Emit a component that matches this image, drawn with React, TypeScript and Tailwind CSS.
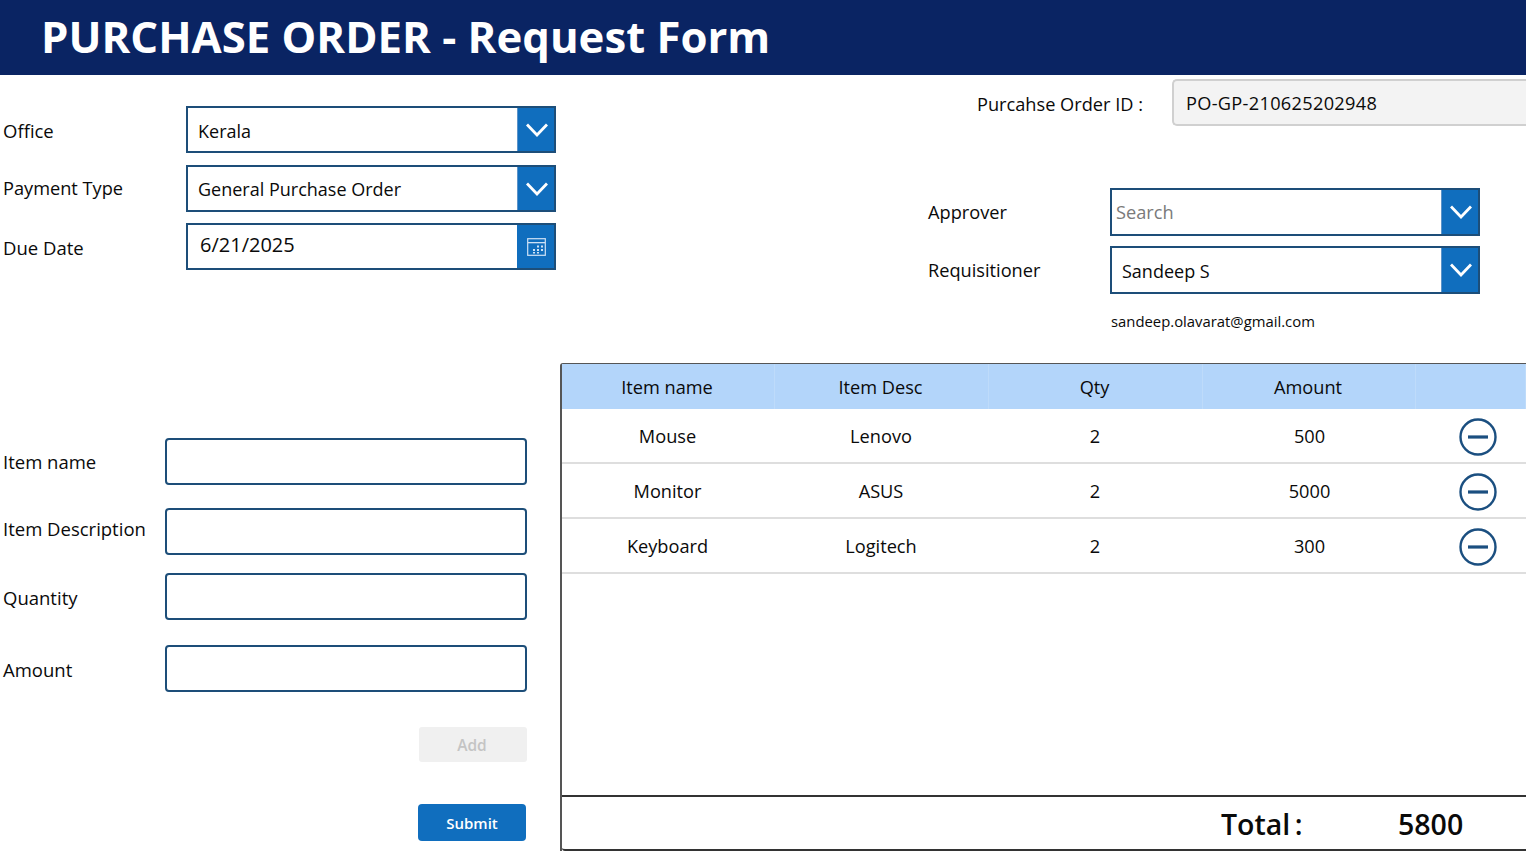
const rows = [
  { name: "Mouse", desc: "Lenovo", qty: "2", amount: "500" },
  { name: "Monitor", desc: "ASUS", qty: "2", amount: "5000" },
  { name: "Keyboard", desc: "Logitech", qty: "2", amount: "300" },
];

const Chevron = () => (
  <div className="flex h-full w-[37px] items-center justify-center border-l border-[#5b93c9] bg-[#106ebe] pl-[1px]">
    <svg width="22" height="14" viewBox="0 0 22 14" fill="none">
      <path d="M1 1.5 L11 12 L21 1.5" stroke="#fff" strokeWidth="2.8" />
    </svg>
  </div>
);

const CalendarIcon = () => (
  <svg width="19" height="18" viewBox="0 0 19 18" fill="none">
    <rect x="0.7" y="0.7" width="17.6" height="16.6" stroke="#cfe2f5" strokeWidth="1.2" />
    <rect x="1" y="4" width="17" height="1.3" fill="#cfe2f5" />
    <path d="M10 7.5h2v2h-2zM14 7.5h2v2h-2zM6 11h2v2H6zM10 11h2v2h-2zM14 11h2v2h-2zM6 14h2v1.6H6zM10 14h2v1.6h-2z" fill="#cfe2f5" />
  </svg>
);

const MinusCircle = () => (
  <svg width="38" height="38" viewBox="0 0 38 38" fill="none">
    <circle cx="19" cy="19" r="17.5" stroke="#1b4f80" strokeWidth="2.4" />
    <rect x="9" y="17.4" width="20" height="3.2" fill="#1b4f80" />
  </svg>
);

const SelectBox = ({ value, className = "h-[47px]", textClass = "pt-[3px]" }: { value: string; className?: string; textClass?: string }) => (
  <div className={`flex w-[370px] items-center border-2 border-[#1d4e79] bg-white ${className}`}>
    <div className={`flex-1 pl-[10px] text-[18px] ${textClass}`}>{value}</div>
    <Chevron />
  </div>
);

const TextField = ({ label, className, labelClass }: { label: string; className: string; labelClass: string }) => (
  <div className={`flex items-center ${className}`}>
    <div className={`w-[162px] text-[18.5px] ${labelClass}`}>{label}</div>
    <div className="h-[47px] w-[362px] rounded-[4px] border-2 border-[#1d4e79] bg-white"></div>
  </div>
);

export default function App() {
  return (
    <div className="h-[851px] w-[1526px] overflow-hidden bg-white font-['Open_Sans','Noto_Sans',sans-serif] text-[#0a0a0a]">
      {/* Header */}
      <div className="flex h-[75px] items-center bg-[#0a2463] pb-[2px] pl-[41px] text-[43.7px] font-bold text-white">
        PURCHASE ORDER - Request Form
      </div>

      {/* Top section */}
      <div className="flex h-[288px] justify-between">
        <div className="flex flex-col gap-[11px] pt-[31px] pl-[3px]">
          <div className="flex items-center">
            <div className="w-[183px] pt-[3px] text-[18.5px]">Office</div>
            <SelectBox value="Kerala" />
          </div>
          <div className="mt-[1px] flex items-center">
            <div className="w-[183px] pt-[1px] text-[18.2px]">Payment Type</div>
            <SelectBox value="General Purchase Order" textClass="pt-[1px]" />
          </div>
          <div className="flex items-center">
            <div className="w-[183px] pt-[3px] text-[18.5px]">Due Date</div>
            <div className="flex h-[47px] w-[370px] items-center border-2 border-[#1d4e79] bg-white">
              <div className="flex-1 pb-[3px] pl-[12px] text-[20px]">6/21/2025</div>
              <div className="flex h-full w-[37px] items-center justify-center bg-[#106ebe] pl-[1px]">
                <CalendarIcon />
              </div>
            </div>
          </div>
        </div>

        <div className="w-[598px] pt-[4px]">
          <div className="flex items-center pl-[49px]">
            <div className="w-[195px] pt-[4px] text-[18.2px]">Purcahse Order ID :</div>
            <div className="flex h-[47px] flex-1 items-center rounded-l-[5px] border-2 border-r-0 border-[#d0d0d0] bg-[#f3f3f3] pt-[3px] pl-[12px] text-[18.2px] tracking-[0.3px]">
              PO-GP-210625202948
            </div>
          </div>
          <div className="mt-[62px] flex flex-col gap-[10px]">
            <div className="flex items-center">
              <div className="w-[182px] pt-[2px] text-[18.2px]">Approver</div>
              <div className="flex h-[48px] w-[370px] items-center border-2 border-[#1d4e79]">
                <div className="flex-1 pt-[1px] pl-[4px] text-[18.2px] text-[#7a7a7a]">Search</div>
                <Chevron />
              </div>
            </div>
            <div className="flex items-center">
              <div className="w-[182px] pt-[2px] text-[18.2px]">Requisitioner</div>
              <SelectBox value="Sandeep S" className="h-[48px]" />
            </div>
          </div>
          <div className="mt-[15px] pl-[183px] text-[14.85px] leading-[24px]">sandeep.olavarat@gmail.com</div>
        </div>
      </div>

      {/* Bottom section */}
      <div className="flex h-[488px]">
        <div className="w-[560px] pl-[3px]">
          <TextField label="Item name" className="mt-[75px]" labelClass="" />
          <TextField label="Item Description" className="mt-[23px]" labelClass="pb-[5px]" />
          <TextField label="Quantity" className="mt-[18px]" labelClass="pt-[3px]" />
          <TextField label="Amount" className="mt-[25px]" labelClass="pt-[3px]" />
          <div className="mt-[35px] ml-[416px] flex h-[35px] w-[108px] items-center justify-center rounded-[3px] bg-[#f0f0f0] pt-[2px] pr-[2px] text-[15.5px] font-semibold text-[#c4c4c4]">
            Add
          </div>
          <div className="mt-[42px] ml-[415px] flex h-[37px] w-[108px] items-center justify-center rounded-[4px] bg-[#106ebe] pt-[2px] text-[15px] font-semibold text-white">
            Submit
          </div>
        </div>

        <div className="flex flex-1 flex-col rounded-tl-[3px] border-t border-l-2 border-[#555]">
          <div className="grid h-[45px] grid-cols-[213px_214px_214px_213px_1fr] bg-[#b3d5fa] text-[18.2px]">
            {["Item name", "Item Desc", "Qty", "Amount", ""].map((h, i) => (
              <div key={i} className="flex items-center justify-center border-r border-[#bedbfa] pt-[2px] pr-[2px]">
                {h}
              </div>
            ))}
          </div>
          <div className="flex-1">
            {rows.map((r) => (
              <div
                key={r.name}
                className="grid h-[55px] grid-cols-[213px_214px_214px_213px_1fr] items-center border-b-2 border-[#dedede] text-[18.2px]"
              >
                <div className="pt-[2px] pr-[2px] text-center">{r.name}</div>
                <div className="pt-[2px] pr-[2px] text-center">{r.desc}</div>
                <div className="pt-[2px] pr-[2px] text-center">{r.qty}</div>
                <div className="pt-[2px] text-center">{r.amount}</div>
                <div className="pt-[2px] pl-[43px]">
                  <div className="flex">
                    <MinusCircle />
                  </div>
                </div>
              </div>
            ))}
          </div>
          <div className="flex h-[56px] items-center rounded-bl-[3px] border-t-2 border-b-2 border-[#333] pt-[2px] text-[28.5px] font-semibold">
            <div className="ml-[659px] w-[177px] [word-spacing:-3px]">Total :</div>
            <div>5800</div>
          </div>
        </div>
      </div>
    </div>
  );
}
